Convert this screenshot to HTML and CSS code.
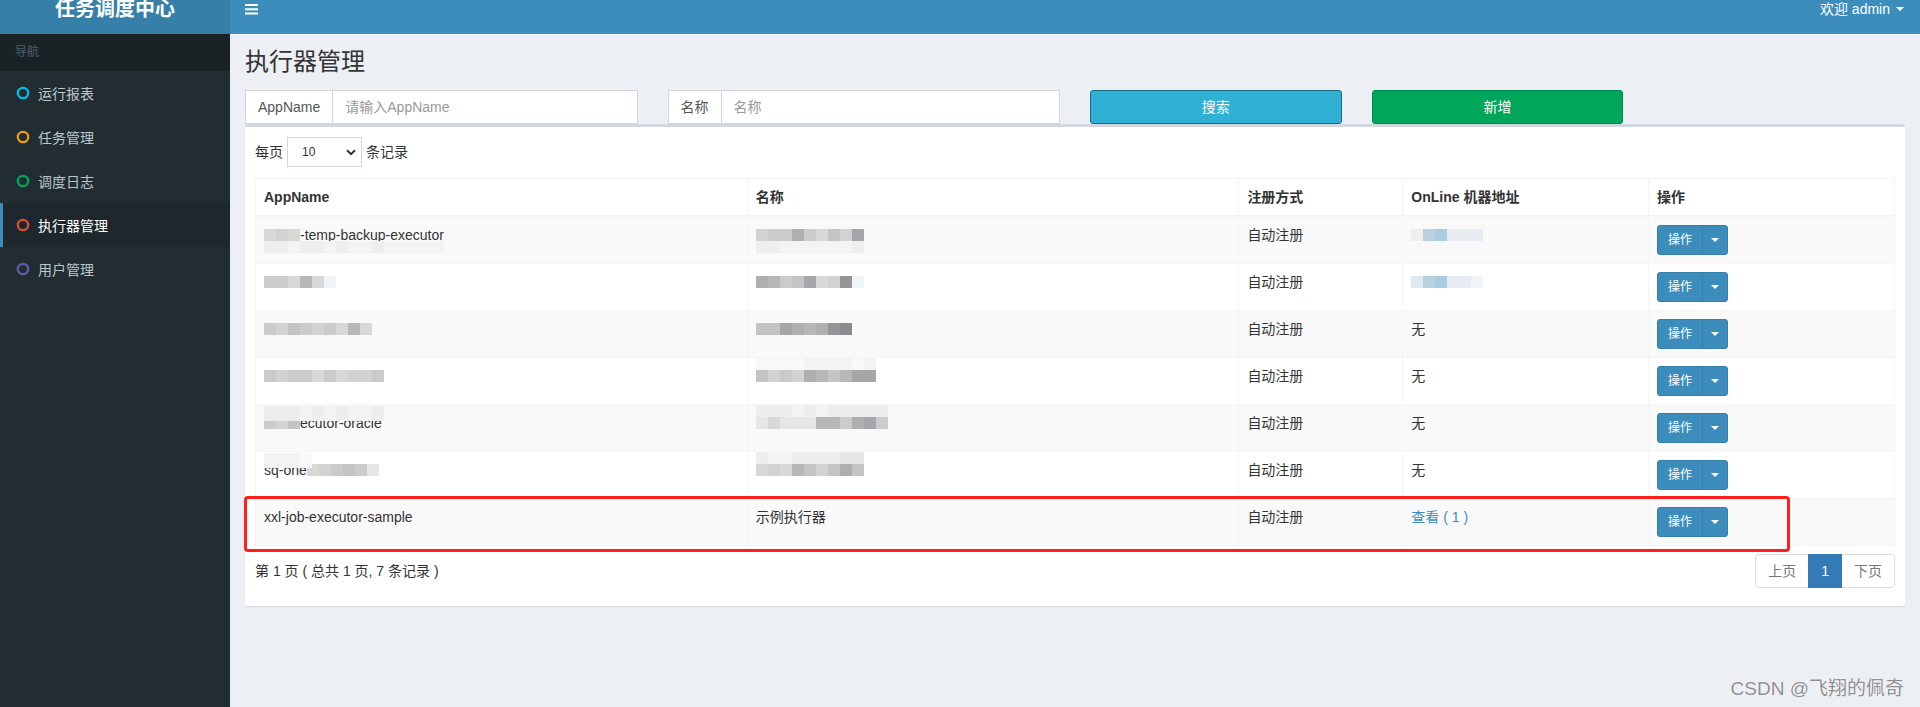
FILE: index.html
```html
<!DOCTYPE html>
<html lang="zh-CN">
<head>
<meta charset="utf-8">
<title>执行器管理</title>
<link rel="stylesheet" href="styles.css">
</head>
<body>
<div class="app">
  <aside class="sidebar">
    <div class="logo"><div class="logo-inner">任务调度中心</div></div>
    <div class="nav-header">导航</div>
    <ul class="menu">
      <li><svg class="ic" width="14" height="14" viewBox="0 0 14 14"><circle cx="7" cy="7" r="5.2" fill="none" stroke="#00c0ef" stroke-width="2.3"/></svg>运行报表</li>
      <li><svg class="ic" width="14" height="14" viewBox="0 0 14 14"><circle cx="7" cy="7" r="5.2" fill="none" stroke="#f39c12" stroke-width="2.3"/></svg>任务管理</li>
      <li><svg class="ic" width="14" height="14" viewBox="0 0 14 14"><circle cx="7" cy="7" r="5.2" fill="none" stroke="#00a65a" stroke-width="2.3"/></svg>调度日志</li>
      <li class="active"><svg class="ic" width="14" height="14" viewBox="0 0 14 14"><circle cx="7" cy="7" r="5.2" fill="none" stroke="#dd4b39" stroke-width="2.3"/></svg>执行器管理</li>
      <li><svg class="ic" width="14" height="14" viewBox="0 0 14 14"><circle cx="7" cy="7" r="5.2" fill="none" stroke="#605ca8" stroke-width="2.3"/></svg>用户管理</li>
    </ul>
  </aside>

  <div class="main">
    <header class="navbar">
      <div class="navbar-inner">
        <span class="toggle"><svg width="13" height="11" viewBox="0 0 13 11"><rect x="0" y="0" width="13" height="2" fill="#fff"/><rect x="0" y="4.3" width="13" height="2" fill="#fff"/><rect x="0" y="8.5" width="13" height="2" fill="#fff"/></svg></span>
        <span class="user">欢迎 admin<span class="caret white"></span></span>
      </div>
    </header>

    <section class="content-header"><h1>执行器管理</h1></section>

    <section class="content">
      <div class="search-row">
        <div class="input-group"><span class="addon">AppName</span><input class="input" type="text" placeholder="请输入AppName"></div>
        <div class="input-group"><span class="addon">名称</span><input class="input" type="text" placeholder="名称"></div>
        <button class="btn btn-info">搜索</button>
        <button class="btn btn-success">新增</button>
      </div>

      <div class="box">
        <div class="len">
          <span>每页</span>
          <span class="select">10<svg width="10" height="7" viewBox="0 0 10 7"><path d="M1 1.2 L5 5.2 L9 1.2" fill="none" stroke="#333" stroke-width="2"/></svg></span>
          <span>条记录</span>
        </div>

        <table class="grid">
          <colgroup><col class="w30"><col class="w30"><col class="w10"><col class="w15"><col class="w15"></colgroup>
          <thead>
            <tr><th>AppName</th><th>名称</th><th>注册方式</th><th>OnLine 机器地址</th><th>操作</th></tr>
          </thead>
          <tbody>
            <tr>
              <td><div class="bl"><span class="m"><i class="k9"></i><i class="k1"></i><i class="k9"></i></span><span>-temp-backup-executor</span><span class="m below"><i class="l2"></i><i class="l2"></i><i class="l3"></i><i class="l2"></i><i class="l2"></i><i class="l3"></i><i class="l2"></i><i class="l3"></i><i class="l3"></i><i class="l2"></i><i class="l3"></i><i class="l3"></i><i class="l3"></i><i class="l3"></i><i class="l3"></i></span></div></td>
              <td><div class="bl"><span class="m"><i class="k1"></i><i class="k2"></i><i class="k2"></i><i class="k5"></i><i class="k2"></i><i class="k9"></i><i class="k3"></i><i class="k1"></i><i class="k6"></i></span><span class="m below"><i class="l2"></i><i class="l2"></i><i class="l3"></i><i class="l3"></i><i class="l3"></i><i class="l3"></i><i class="l3"></i><i class="l3"></i><i class="l2"></i></span></div></td>
              <td>自动注册</td>
              <td><div class="bl"><span class="m"><i class="l2"></i><i class="bl1"></i><i class="bl2"></i><i class="bl3"></i><i class="bl3"></i><i class="bl3"></i></span></div></td>
              <td><div class="btn-group"><button class="op">操作</button><button class="op split"><span class="caret white"></span></button></div></td>
            </tr>
            <tr>
              <td><div class="bl"><span class="m"><i class="k2"></i><i class="k2"></i><i class="k9"></i><i class="k4"></i><i class="k9"></i><i class="bl5"></i></span></div></td>
              <td><div class="bl"><span class="m"><i class="k5"></i><i class="k4"></i><i class="k2"></i><i class="k3"></i><i class="k6"></i><i class="k9"></i><i class="k1"></i><i class="k7"></i><i class="bl5"></i></span></div></td>
              <td>自动注册</td>
              <td><div class="bl"><span class="m"><i class="bl4"></i><i class="bl1"></i><i class="bl2"></i><i class="bl3"></i><i class="bl3"></i><i class="bl5"></i></span></div></td>
              <td><div class="btn-group"><button class="op">操作</button><button class="op split"><span class="caret white"></span></button></div></td>
            </tr>
            <tr>
              <td><div class="bl"><span class="m"><i class="k2"></i><i class="k1"></i><i class="k3"></i><i class="k2"></i><i class="k1"></i><i class="k2"></i><i class="k9"></i><i class="k4"></i><i class="k9"></i></span></div></td>
              <td><div class="bl"><span class="m"><i class="k3"></i><i class="k3"></i><i class="k6"></i><i class="k5"></i><i class="k4"></i><i class="k5"></i><i class="k7"></i><i class="k8"></i></span></div></td>
              <td>自动注册</td>
              <td>无</td>
              <td><div class="btn-group"><button class="op">操作</button><button class="op split"><span class="caret white"></span></button></div></td>
            </tr>
            <tr>
              <td><div class="bl"><span class="m"><i class="k2"></i><i class="k1"></i><i class="k2"></i><i class="k2"></i><i class="k9"></i><i class="k2"></i><i class="k9"></i><i class="k1"></i><i class="k1"></i><i class="k2"></i></span></div></td>
              <td><div class="bl"><span class="m"><i class="k3"></i><i class="k1"></i><i class="k2"></i><i class="k1"></i><i class="k5"></i><i class="k4"></i><i class="k3"></i><i class="k4"></i><i class="k6"></i><i class="k6"></i></span><span class="m above"><i class="l4"></i><i class="l4"></i><i class="l4"></i><i class="l4"></i><i class="l3"></i><i class="l3"></i><i class="l3"></i><i class="l3"></i><i class="l4"></i><i class="l3"></i></span></div></td>
              <td>自动注册</td>
              <td>无</td>
              <td><div class="btn-group"><button class="op">操作</button><button class="op split"><span class="caret white"></span></button></div></td>
            </tr>
            <tr>
              <td><div class="bl"><span class="m"><i class="k2"></i><i class="k1"></i><i class="k3"></i></span><span>ecutor-oracle</span><span class="m above tall"><i class="l2"></i><i class="l2"></i><i class="l2"></i><i class="l3"></i><i class="l2"></i><i class="l3"></i><i class="l2"></i><i class="l3"></i><i class="l3"></i><i class="l2"></i></span></div></td>
              <td><div class="bl"><span class="m"><i class="l1"></i><i class="k9"></i><i class="l1"></i><i class="l1"></i><i class="l1"></i><i class="k4"></i><i class="k4"></i><i class="k2"></i><i class="k5"></i><i class="k6"></i><i class="k2"></i></span><span class="m above"><i class="l2"></i><i class="l2"></i><i class="l2"></i><i class="l3"></i><i class="l2"></i><i class="l3"></i><i class="l2"></i><i class="l2"></i><i class="l2"></i><i class="l2"></i><i class="l2"></i></span></div></td>
              <td>自动注册</td>
              <td>无</td>
              <td><div class="btn-group"><button class="op">操作</button><button class="op split"><span class="caret white"></span></button></div></td>
            </tr>
            <tr>
              <td><div class="bl"><span>sq-one</span><span class="m"><i class="k9"></i><i class="k1"></i><i class="k2"></i><i class="k3"></i><i class="k2"></i><i class="l1"></i></span><span class="m above tall"><i class="l3"></i><i class="l3"></i><i class="l3"></i><i class="l4"></i></span></div></td>
              <td><div class="bl"><span class="m"><i class="k9"></i><i class="k1"></i><i class="k9"></i><i class="k4"></i><i class="k3"></i><i class="k1"></i><i class="k3"></i><i class="k5"></i><i class="k3"></i></span><span class="m above"><i class="l2"></i><i class="l3"></i><i class="l3"></i><i class="l2"></i><i class="l2"></i><i class="l2"></i><i class="l2"></i><i class="l1"></i><i class="l1"></i></span></div></td>
              <td>自动注册</td>
              <td>无</td>
              <td><div class="btn-group"><button class="op">操作</button><button class="op split"><span class="caret white"></span></button></div></td>
            </tr>
            <tr>
              <td>xxl-job-executor-sample</td>
              <td>示例执行器</td>
              <td>自动注册</td>
              <td><a class="link">查看 ( 1 )</a></td>
              <td><div class="btn-group"><button class="op">操作</button><button class="op split"><span class="caret white"></span></button></div></td>
            </tr>
          </tbody>
        </table>

        <div class="dt-foot">
          <span>第 1 页 ( 总共 1 页, 7 条记录 )</span>
          <div class="pager">
            <a class="pg first">上页</a>
            <a class="pg active">1</a>
            <a class="pg last">下页</a>
          </div>
        </div>
      </div>
    </section>
  </div>

  <div class="annot"></div>
  <div class="watermark">CSDN @飞翔的佩奇</div>
</div>
</body>
</html>
```

FILE: styles.css
```css
* { box-sizing: border-box; }

body {
  margin: 0;
  font-family: "Liberation Sans", "Noto Sans CJK SC", sans-serif;
  font-size: 14px;
  color: #333;
  background: #ecf0f5;
}

.app {
  display: grid;
  grid-template-columns: 230px 1fr;
  height: 707px;
  position: relative;
  overflow: hidden;
}

/* ---------- sidebar ---------- */
.sidebar {
  background: #222d32;
  display: flex;
  flex-direction: column;
}
.logo {
  height: 34px;
  overflow: hidden;
  background: #367fa9;
}
.logo-inner {
  margin-top: -16px;
  height: 50px;
  line-height: 50px;
  text-align: center;
  color: #fff;
  font-size: 20px;
  font-weight: bold;
}
.nav-header {
  background: #1a2226;
  color: #4b646f;
  font-size: 12px;
  line-height: 17px;
  padding: 10px 25px 10px 15px;
}
.menu {
  list-style: none;
  margin: 0;
  padding: 0;
}
.menu li {
  height: 44px;
  display: flex;
  align-items: center;
  border-left: 3px solid transparent;
  padding-left: 13px;
  color: #b8c7ce;
  font-size: 14px;
}
.menu li .ic {
  margin-right: 8px;
  flex: none;
}
.menu li.active {
  background: #1e282c;
  border-left-color: #3c8dbc;
  color: #fff;
}

/* ---------- navbar ---------- */
.main {
  display: flex;
  flex-direction: column;
  min-width: 0;
}
.navbar {
  height: 34px;
  overflow: hidden;
  background: #3c8dbc;
}
.navbar-inner {
  margin-top: -16px;
  height: 50px;
  display: flex;
  align-items: center;
  justify-content: space-between;
}
.toggle {
  padding: 0 15px;
  display: flex;
  align-items: center;
}
.user {
  color: #fff;
  padding-right: 16px;
  display: flex;
  align-items: center;
  gap: 6px;
  line-height: 20px;
}
.caret {
  display: inline-block;
  width: 0;
  height: 0;
  border-top: 4px solid #fff;
  border-left: 4px solid transparent;
  border-right: 4px solid transparent;
}

/* ---------- content ---------- */
.content-header {
  padding: 15px 15px 0;
}
.content-header h1 {
  margin: 0;
  font-size: 24px;
  line-height: 26px;
  font-weight: normal;
  color: #333;
}
.content {
  padding: 15px;
}

.search-row {
  display: grid;
  grid-template-columns:
    calc((100% + 30px) / 4 - 30px)
    calc((100% + 30px) / 4 - 30px)
    calc((100% + 30px) / 6 - 30px)
    calc((100% + 30px) / 6 - 30px);
  column-gap: 30px;
}
.input-group {
  display: flex;
  height: 34px;
}
.addon {
  padding: 6px 12px;
  border: 1px solid #d2d6de;
  border-right: 0;
  background: #fff;
  color: #555;
  line-height: 20px;
  font-size: 14px;
}
.input {
  flex: 1;
  min-width: 0;
  height: 34px;
  border: 1px solid #d2d6de;
  padding: 6px 12px;
  font: 14px/20px "Liberation Sans", "Noto Sans CJK SC", sans-serif;
  color: #555;
  background: #fff;
  outline: none;
}
.input::placeholder { color: #999; }

.btn {
  height: 34px;
  border-radius: 3px;
  border: 1px solid;
  color: #fff;
  font: 14px/20px "Liberation Sans", "Noto Sans CJK SC", sans-serif;
  padding: 6px 12px;
}
.btn-info {
  background: #31b0d5;
  border-color: #1b6d85;
}
.btn-success {
  background: #00a65a;
  border-color: #008d4c;
}

.box {
  background: #fff;
  border-top: 3px solid #d2d6de;
  border-radius: 3px;
  box-shadow: 0 1px 1px rgba(0, 0, 0, 0.1);
  padding: 10px;
}

.len {
  display: flex;
  align-items: center;
  gap: 4px;
  height: 30px;
  line-height: 20px;
}
.select {
  width: 75px;
  height: 30px;
  border: 1px solid #d2d6de;
  display: flex;
  align-items: center;
  justify-content: space-between;
  padding: 0 5px 0 14px;
  font-size: 12px;
  color: #333;
}

/* ---------- table ---------- */
.grid {
  width: 100%;
  table-layout: fixed;
  border-collapse: collapse;
  border: 1px solid #f4f4f4;
  margin-top: 11px;
}
.w30 { width: 30%; }
.w10 { width: 10%; }
.w15 { width: 15%; }
.grid th,
.grid td {
  border: 1px solid #f4f4f4;
  padding: 8px;
  line-height: 20px;
  text-align: left;
  vertical-align: top;
  font-size: 14px;
  color: #333;
  white-space: nowrap;
}
.grid thead th {
  border-bottom: 2px solid #f4f4f4;
  font-weight: bold;
  vertical-align: bottom;
}
.grid tbody tr:nth-child(odd) { background: #f9f9f9; }

.link { color: #3c8dbc; text-decoration: none; }

/* mosaic (blurred cells) */
.bl {
  position: relative;
  height: 20px;
  display: flex;
  align-items: center;
}
.m { display: inline-flex; }
.m i { display: block; width: 12px; height: 12px; }
.m.below { position: absolute; left: 0; top: 16px; }
.m.above { position: absolute; left: 0; top: -8px; }
.m.above.tall { top: -7px; opacity: 0.94; }
.m.above.tall i { height: 15px; }
.k1 { background: #d2d2d2; }
.k2 { background: #cbcbcb; }
.k3 { background: #c4c4c4; }
.k4 { background: #b8b6b6; }
.k5 { background: #b0aeae; }
.k6 { background: #a6a6aa; }
.k7 { background: #969496; }
.k8 { background: #8c8a90; }
.k9 { background: #d8d8d6; }
.l1 { background: #e6e6e6; }
.l2 { background: #eeeeee; }
.l3 { background: #f3f3f3; }
.l4 { background: #f8f8f8; }
.bl1 { background: #b8d0e0; }
.bl2 { background: #a8cce0; }
.bl3 { background: #e6ecf2; }
.bl4 { background: #dde8f0; }
.bl5 { background: #eef4f8; }

/* action buttons */
.btn-group { display: inline-flex; }
.op {
  height: 30px;
  background: #3c8dbc;
  border: 1px solid #367fa9;
  color: #fff;
  font: 12px/18px "Liberation Sans", "Noto Sans CJK SC", sans-serif;
  padding: 5px 10px;
  border-radius: 3px 0 0 3px;
}
.op.split {
  margin-left: -1px;
  padding: 5px 8px;
  border-radius: 0 3px 3px 0;
  display: flex;
  align-items: center;
}

/* footer / pagination */
.dt-foot {
  display: flex;
  justify-content: space-between;
  align-items: center;
  margin: 8px 0;
  line-height: 20px;
}
.pager { display: flex; }
.pg {
  padding: 6px 12px;
  line-height: 20px;
  border: 1px solid #ddd;
  margin-left: -1px;
  color: #777;
  background: #fff;
  font-size: 14px;
}
.pg.first { border-radius: 4px 0 0 4px; }
.pg.last { border-radius: 0 4px 4px 0; }
.pg.active {
  background: #337ab7;
  border-color: #337ab7;
  color: #fff;
  position: relative;
}

/* overlays */
.annot {
  position: absolute;
  left: 244px;
  top: 496px;
  width: 1546px;
  height: 56px;
  border: 3px solid #ff1f1f;
  border-radius: 4px;
  pointer-events: none;
}
.watermark {
  position: absolute;
  right: 16px;
  bottom: 8px;
  font-size: 19px;
  line-height: 20px;
  color: #8f8f8f;
  text-shadow: 0 0 1px #fff, 0 0 1px #fff;
}
```
